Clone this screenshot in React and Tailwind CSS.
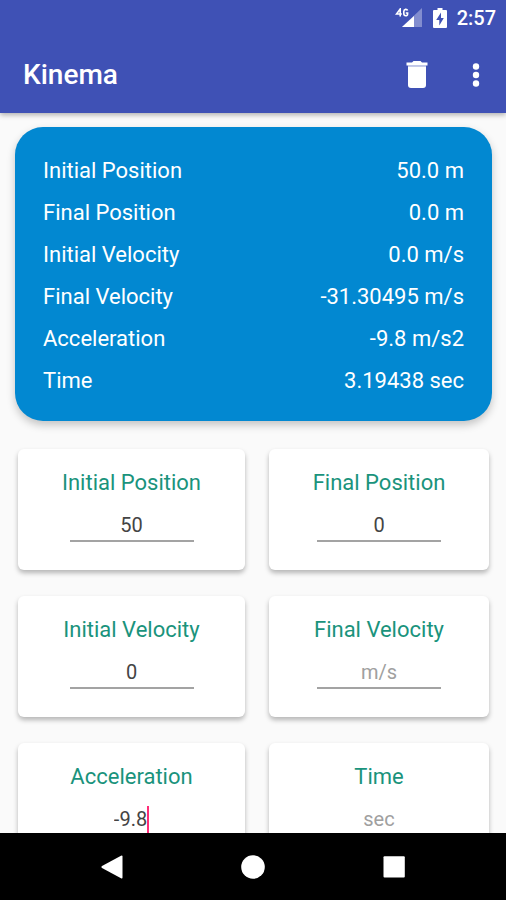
import clsx from "clsx";

const RESULTS = [
  { label: "Initial Position", value: "50.0 m" },
  { label: "Final Position", value: "0.0 m" },
  { label: "Initial Velocity", value: "0.0 m/s" },
  { label: "Final Velocity", value: "-31.30495 m/s" },
  { label: "Acceleration", value: "-9.8 m/s2" },
  { label: "Time", value: "3.19438 sec" },
];

const FIELDS = [
  { id: "initialPosition", label: "Initial Position", value: "50", unit: "m" },
  { id: "finalPosition", label: "Final Position", value: "0", unit: "m" },
  { id: "initialVelocity", label: "Initial Velocity", value: "0", unit: "m/s" },
  { id: "finalVelocity", label: "Final Velocity", value: "", unit: "m/s" },
  {
    id: "acceleration",
    label: "Acceleration",
    value: "-9.8",
    unit: "m/s2",
    active: true,
  },
  { id: "time", label: "Time", value: "", unit: "sec" },
];

const SignalIcon = () => (
  <svg className="h-5 w-7" viewBox="0 0 28 20" fill="white">
    <path d="M27 0v19H7z" opacity="0.35" />
    <path d="M19 8v11H7z" />
    <path
      d="M5.200 8.500V1L1.500 6H6.800M12.600 2.600C12 .8 8.800 .8 8.800 3.500V5.500C8.800 8.500 12.600 8.500 12.600 6V5H10.800"
      fill="none"
      stroke="white"
      strokeWidth="1.600"
    />
  </svg>
);

const BatteryIcon = () => (
  <svg className="h-5 w-[14px]" viewBox="0 0 14 20">
    <path
      d="M4.500 0h5v2H13a1 1 0 0 1 1 1v16a1 1 0 0 1-1 1H1a1 1 0 0 1-1-1V3a1 1 0 0 1 1-1h3.500z"
      fill="white"
    />
    <path d="M8 4.500L3.200 12H6.300V17.500L10.800 10H8z" fill="#3f51b5" />
  </svg>
);

const TrashIcon = () => (
  <svg className="h-[27px] w-[22px]" viewBox="0 0 22 27" fill="white">
    <path d="M6 1.500L7.500 0h7L16 1.500h5.500V4.500H.5V1.500z" />
    <path d="M2 4.500h18V6H2z" opacity="0.7" />
    <path d="M2 6h18v18a3 3 0 0 1-3 3H5a3 3 0 0 1-3-3z" />
  </svg>
);

const MoreIcon = () => (
  <svg className="h-6 w-2" viewBox="0 0 8 24" fill="white">
    <circle cx="4" cy="3.500" r="3.200" />
    <circle cx="4" cy="12" r="3.200" />
    <circle cx="4" cy="20.500" r="3.200" />
  </svg>
);

function Header() {
  return (
    <header className="relative z-10 bg-[#3f51b5] text-white shadow-[0_2px_5px_rgba(0,0,0,0.3)]">
      <div className="flex h-9 items-center justify-end pr-[10px]">
        <SignalIcon />
        <span className="ml-[10px]">
          <BatteryIcon />
        </span>
        <time className="ml-[10px] text-xl font-medium">2:57</time>
      </div>
      <div className="flex h-[77px] items-center pr-[26px] pl-[23px]">
        <h1 className="flex-1 text-[28px] font-medium">Kinema</h1>
        <button type="button" aria-label="Delete">
          <TrashIcon />
        </button>
        <button type="button" aria-label="More options" className="ml-11">
          <MoreIcon />
        </button>
      </div>
    </header>
  );
}

function Results() {
  return (
    <dl className="mr-[14px] ml-[15px] rounded-[28px] bg-[#0288d1] px-7 pt-[23px] pb-[19px] text-[22px] leading-[42px] text-white shadow-[0_4px_8px_rgba(0,0,0,0.22)]">
      {RESULTS.map(({ label, value }) => (
        <div key={label} className="flex justify-between">
          <dt>{label}</dt>
          <dd>{value}</dd>
        </div>
      ))}
    </dl>
  );
}

function Field({ id, label, value, unit, active }) {
  return (
    <div className="flex h-[121px] flex-col items-center rounded-md bg-white pt-[18px] shadow-[0_3px_5px_rgba(0,0,0,0.28)]">
      <label htmlFor={id} className="text-[22px] leading-8 text-[#1a937c]">
        {label}
      </label>
      <div className="mt-[11px] flex h-8 w-[124px] items-center justify-center border-b-2 border-[#a3a3a3]">
        <input
          id={id}
          type="text"
          inputMode="decimal"
          defaultValue={value}
          placeholder={unit}
          className={clsx(
            "text-center text-xl text-[#444] outline-none placeholder:text-[#a0a0a0]",
            active ? "field-sizing-content caret-transparent" : "w-full"
          )}
        />
        {active && <span className="h-[27px] w-[2px] bg-[#ff2d78]" />}
      </div>
    </div>
  );
}

function NavigationBar() {
  return (
    <nav className="flex h-[67px] shrink-0 items-center justify-center gap-[117px] bg-black">
      <button type="button" aria-label="Back">
        <svg className="size-6" viewBox="0 0 24 24" fill="white">
          <path d="M21 .8Q22.500 0 22.500 1.500V22.500Q22.500 24 21 23.200L2 13Q.5 12 2 11z" />
        </svg>
      </button>
      <button type="button" aria-label="Home">
        <svg className="size-6" viewBox="0 0 24 24" fill="white">
          <circle cx="12" cy="12" r="11.800" />
        </svg>
      </button>
      <button type="button" aria-label="Recent apps">
        <svg className="size-6" viewBox="0 0 24 24" fill="white">
          <rect x="1.500" y="1.300" width="21.300" height="21.300" rx="1" />
        </svg>
      </button>
    </nav>
  );
}

export default function App() {
  return (
    <div className="flex h-screen flex-col bg-[#fafafa] font-[Roboto,sans-serif]">
      <Header />
      <main className="min-h-0 flex-1 overflow-y-auto pt-[14px] [scrollbar-width:none]">
        <Results />
        <form className="mt-7 mr-[17px] ml-[18px] grid grid-cols-[227fr_220fr] gap-x-6 gap-y-[26px] pb-6">
          {FIELDS.map((field) => (
            <Field key={field.id} {...field} />
          ))}
        </form>
      </main>
      <NavigationBar />
    </div>
  );
}
